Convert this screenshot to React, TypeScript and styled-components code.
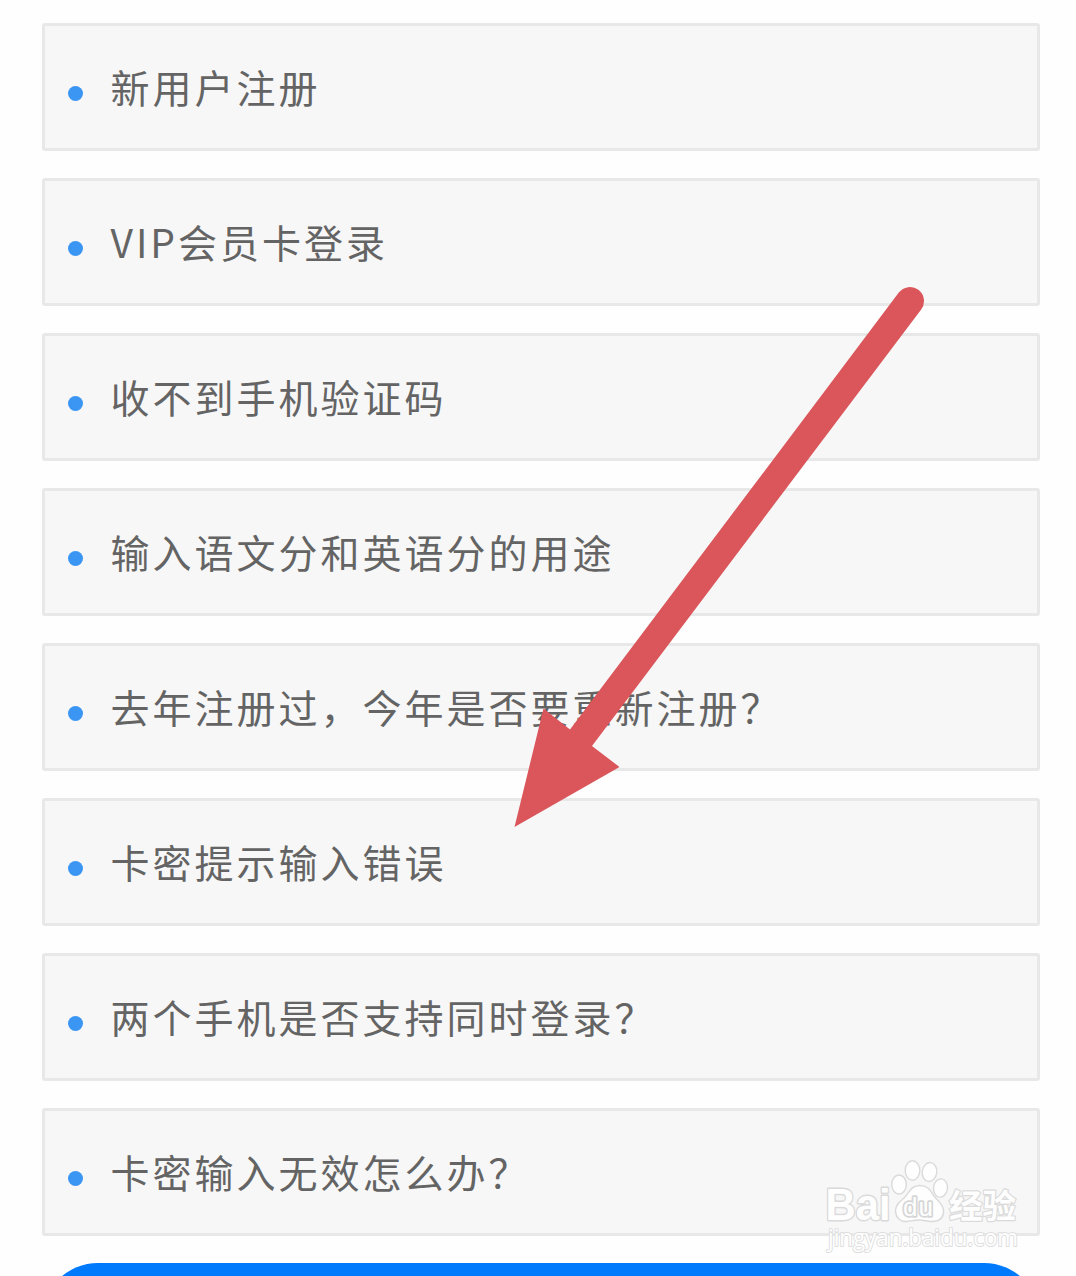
import React from 'react';
import styled, { createGlobalStyle } from 'styled-components';

const GlobalStyle = createGlobalStyle`
  body {
    margin: 0;
    background: #fefefe;
  }
`;

const Page = styled.main`
  position: relative;
  box-sizing: border-box;
  height: 1276px;
  padding: 23px 36px 0 42px;
  overflow: hidden;
  font-family: 'Noto Sans CJK SC', sans-serif;
`;

const List = styled.ul`
  display: flex;
  flex-direction: column;
  gap: 27px;
  margin: 0;
  padding: 0;
  list-style: none;
`;

const Item = styled.li`
  display: flex;
  align-items: center;
  gap: 27.5px;
  box-sizing: border-box;
  height: 128px;
  padding: 0 23px;
  background: #f7f7f7;
  border: 3px solid #e8e8e8;
  border-radius: 3px;
`;

const Bullet = styled.span`
  flex: none;
  width: 15px;
  height: 15px;
  margin-top: 13px;
  border-radius: 50%;
  background: #3b96f3;
`;

const Label = styled.span`
  margin-bottom: 3px;
  color: #646464;
  font-size: 39px;
  line-height: 58px;
  letter-spacing: 3px;
  white-space: nowrap;
`;

const SubmitButton = styled.button`
  display: block;
  width: 100%;
  height: 112px;
  margin-top: 27px;
  border: 0;
  border-radius: 56px;
  background: #007afd;
`;

const Overlay = styled.svg`
  position: absolute;
  top: 0;
  left: 0;
  pointer-events: none;
`;

const items = [
  '新用户注册',
  'VIP会员卡登录',
  '收不到手机验证码',
  '输入语文分和英语分的用途',
  '去年注册过，今年是否要重新注册？',
  '卡密提示输入错误',
  '两个手机是否支持同时登录？',
  '卡密输入无效怎么办？',
];

const Arrow = () => (
  <path
    d="M514.5 827 L543.5 708.5 L570 729.5 L898.8 292.6 A14 14 0 0 1 921.2 309.4 L592 746 L619.5 767 Z"
    fill="#da565b"
  />
);

const Watermark = () => (
  <g fill="#fefefe" stroke="#dadada" strokeWidth="1.4" strokeLinejoin="round">
    <text
      x="825.500"
      y="1220"
      fontFamily="Liberation Sans, sans-serif"
      fontWeight="700"
      fontSize="43.500"
      textLength="65"
      lengthAdjust="spacingAndGlyphs"
      strokeWidth="2.800"
      paintOrder="stroke"
    >
      Bai
    </text>
    <ellipse cx="899" cy="1184.500" rx="7.300" ry="9.500" />
    <ellipse cx="912.500" cy="1170.500" rx="7.300" ry="9.700" />
    <ellipse cx="929.500" cy="1172" rx="7.300" ry="9.500" transform="rotate(8 929.5 1172)" />
    <ellipse cx="940.500" cy="1188" rx="7" ry="9.200" transform="rotate(8 940.5 1188)" />
    <path d="M919.5 1185.500 C911 1185.500 909 1193 904 1198 C898 1203 895.500 1206 895.500 1211 C896 1218 900 1222 907 1221.500 C911 1221 915 1220 919.500 1220 C924 1220 928 1222 933 1221.500 C940 1221 944 1217 943.500 1210 C943 1204 938 1201 934 1196 C930 1190 928 1185.500 919.500 1185.500 Z" />
    <text
      x="903"
      y="1215.500"
      fontFamily="Liberation Sans, sans-serif"
      fontSize="26"
      textLength="30"
      stroke="#d6d6d6"
      strokeWidth="3.600"
      paintOrder="stroke"
    >
      du
    </text>
    <text
      x="949"
      y="1218"
      fontFamily="Noto Sans CJK SC, sans-serif"
      fontWeight="700"
      fontSize="33.500"
      textLength="67"
      strokeWidth="2.400"
      paintOrder="stroke"
    >
      经验
    </text>
    <text
      x="828"
      y="1246"
      fontFamily="Open Sans, sans-serif"
      fontSize="23"
      textLength="190"
      lengthAdjust="spacingAndGlyphs"
      stroke="#dedede"
      strokeWidth="2"
      paintOrder="stroke"
    >
      jingyan.baidu.com
    </text>
  </g>
);

export default function App() {
  return (
    <>
      <GlobalStyle />
      <Page>
        <List>
          {items.map((text) => (
            <Item key={text}>
              <Bullet />
              <Label>{text}</Label>
            </Item>
          ))}
        </List>
        <SubmitButton />
        <Overlay width="1076" height="1276" viewBox="0 0 1076 1276" aria-hidden="true">
          <Arrow />
          <Watermark />
        </Overlay>
      </Page>
    </>
  );
}
